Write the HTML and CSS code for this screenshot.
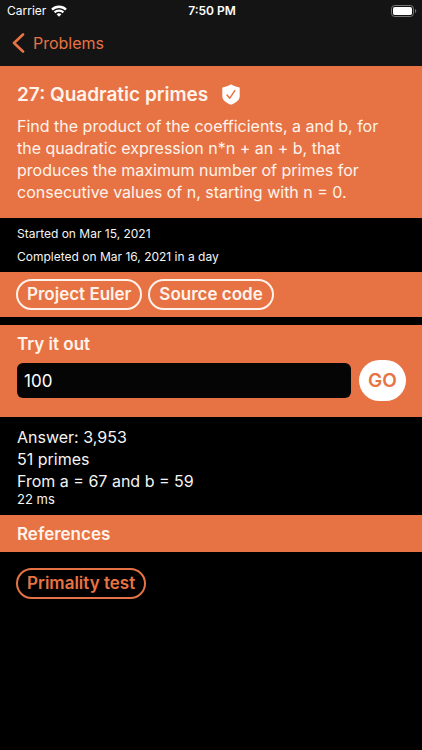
FILE: index.html
```
<!DOCTYPE html>
<html lang="en">
<head>
    <meta charset="UTF-8">
    <meta name="viewport" content="width=device-width, initial-scale=1">
    <title>Quadratic primes</title>
    <link rel="stylesheet" href="styles.css">
</head>
<body>
<header class="top-bar">
    <div class="status">
        <div class="status-carrier">
            Carrier
            <svg width="16" height="12" viewBox="0 0 16 12" fill="none" stroke="#fff" stroke-width="2.3">
                <path d="M1 4.6a10 10 0 0 1 14 0"/>
                <path d="M3.6 7.4a6.3 6.3 0 0 1 8.8 0"/>
                <path d="M8 11.8L5.6 9.3a3.5 3.5 0 0 1 4.8 0z" fill="#fff" stroke="none"/>
            </svg>
        </div>
        <div class="status-time">7:50 PM</div>
        <div class="status-battery">
            <svg width="26" height="12" viewBox="0 0 26 12">
                <rect x="0.5" y="0.5" width="22" height="11" rx="3.2" fill="none" stroke="#777"/>
                <rect x="2" y="2" width="19" height="8" rx="1.8" fill="#fff"/>
                <path d="M24 4v4a2.2 2.2 0 0 0 0-4z" fill="#777"/>
            </svg>
        </div>
    </div>
    <a class="back" href="#">
        <svg width="13" height="20" viewBox="0 0 13 20" fill="none" stroke="currentColor" stroke-width="2.6" stroke-linecap="round" stroke-linejoin="round">
            <path d="M11 1.5L2 10l9 8.5"/>
        </svg>
        Problems
    </a>
</header>
<main>
    <section class="band problem">
        <h1 class="problem-title">
            27: Quadratic primes
            <svg width="18" height="22" viewBox="0 0 18 22">
                <path d="M9 .2C11 1.5 13.600 2.500 16.800 3.200c.6.1.9.4.9 1v8c0 3.800-3.300 6.300-8.700 8.500C3.600 18.500.3 16 .3 12.200v-8c0-.6.3-.9.9-1C4.400 2.500 7 1.500 9 .2z" fill="#fff"/>
                <path d="M5 11l2.800 3.200L12.800 6.600" fill="none" stroke="#e77344" stroke-width="1.500" stroke-linecap="round" stroke-linejoin="round"/>
            </svg>
        </h1>
        <p class="problem-text">Find the product of the coefficients, a and b, for the quadratic expression n*n + an + b, that produces the maximum number of primes for consecutive values of n, starting with n = 0.</p>
    </section>
    <section class="dates">
        <div>Started on Mar 15, 2021</div>
        <div>Completed on Mar 16, 2021 in a day</div>
    </section>
    <nav class="band links">
        <a class="pill" href="#">Project Euler</a>
        <a class="pill" href="#">Source code</a>
    </nav>
    <form class="band try" onsubmit="return false">
        <label class="subtitle" for="count">Try it out</label>
        <div class="try-row">
            <input class="try-input" id="count" type="text" inputmode="numeric" value="100">
            <button class="try-button" type="submit">GO</button>
        </div>
    </form>
    <section class="answer">
        <div>Answer: 3,953</div>
        <div>51 primes</div>
        <div>From a = 67 and b = 59</div>
        <div class="answer-time">22 ms</div>
    </section>
    <h2 class="band subtitle references-title">References</h2>
    <section class="references">
        <a class="pill pill-orange" href="#">Primality test</a>
    </section>
</main>
</body>
</html>
```
FILE: styles.css
```
* {
    box-sizing: border-box;
}

body {
    margin: 0;
    background: #000000;
    color: #f4f4f4;
    font-family: 'Inter', sans-serif;
    font-size: 16px;
    line-height: 22px;
}

.top-bar {
    height: 66px;
    background: #141414;
}

.status {
    display: grid;
    grid-template-columns: 1fr auto 1fr;
    align-items: center;
    height: 22px;
    padding: 0 5px 0 7px;
    color: #ffffff;
    font-size: 12px;
}

.status-carrier {
    display: flex;
    align-items: center;
    gap: 5px;
}

.status-time {
    font-weight: 600;
}

.status-battery {
    display: flex;
    justify-content: flex-end;
}

.back {
    display: inline-flex;
    align-items: center;
    gap: 8px;
    height: 42px;
    padding: 0 12px;
    color: #e77344;
    text-decoration: none;
}

.band {
    background: #e77344;
    color: #fff3ec;
}

.problem {
    padding: 16px 24px 15px 17px;
}

.problem-title {
    display: flex;
    align-items: center;
    gap: 14px;
    margin: 0 0 7px;
    font-size: 19px;
    line-height: 26px;
    font-weight: 600;
}

.problem-text {
    margin: 0;
}

.dates {
    display: grid;
    gap: 1px;
    padding: 5px 17px 4px;
    font-size: 12px;
}

.links {
    display: flex;
    flex-wrap: wrap;
    gap: 6px;
    padding: 7px 16px;
}

.pill {
    padding: 3px 9px;
    border: 2px solid #fff3ec;
    border-radius: 16px;
    color: #fff3ec;
    font-size: 17px;
    line-height: 21px;
    font-weight: 600;
    text-decoration: none;
}

.pill-orange {
    border-color: #e77344;
    color: #e77344;
}

.try {
    margin-top: 8px;
    padding: 8px 16px 16px 17px;
}

.subtitle {
    display: block;
    font-size: 17px;
    font-weight: 600;
}

.try-row {
    display: flex;
    align-items: center;
    gap: 8px;
    margin-top: 5px;
}

.try-input {
    flex: 1;
    min-width: 0;
    height: 35px;
    padding: 0 7px;
    border: 0;
    border-radius: 6px;
    background: #050505;
    color: #ffffff;
    font: inherit;
    font-size: 17px;
}

.try-button {
    width: 47px;
    height: 41px;
    padding: 0;
    border: 0;
    border-radius: 21px;
    background: #ffffff;
    color: #e77344;
    font: inherit;
    font-size: 19px;
    font-weight: 600;
}

.answer {
    padding: 9px 17px 8px;
}

.answer-time {
    font-size: 13px;
    line-height: 15px;
}

.references-title {
    margin: 0;
    padding: 8px 17px 7px;
}

.references {
    display: flex;
    padding: 16px;
}
```
